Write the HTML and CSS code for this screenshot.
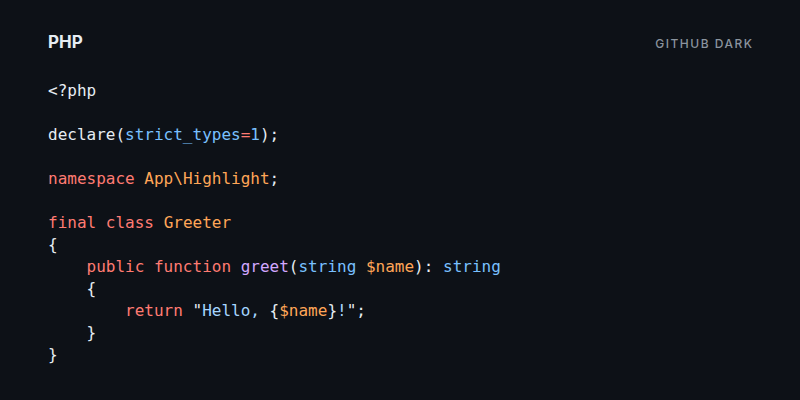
FILE: index.html
```html
<!DOCTYPE html>
<html>
<head>
<meta charset="utf-8">
<link rel="stylesheet" href="styles.css">
</head>
<body>
<div class="card">
  <header class="head">
    <span class="lang">PHP</span>
    <span class="theme">GITHUB DARK</span>
  </header>
<pre class="code"><span class="t">&lt;?php</span>

<span class="t">declare(</span><span class="c">strict_types</span><span class="k">=</span><span class="c">1</span><span class="t">);</span>

<span class="k">namespace</span> <span class="e">App\Highlight</span><span class="t">;</span>

<span class="k">final</span> <span class="k">class</span> <span class="e">Greeter</span>
<span class="t">{</span>
    <span class="k">public</span> <span class="k">function</span> <span class="f">greet</span><span class="t">(</span><span class="c">string</span> <span class="e">$name</span><span class="t">):</span> <span class="c">string</span>
    <span class="t">{</span>
        <span class="k">return</span> <span class="t">"</span><span class="s">Hello, </span><span class="t">{</span><span class="e">$name</span><span class="t">}</span><span class="s">!</span><span class="t">";</span>
    <span class="t">}</span>
<span class="t">}</span></pre>
</div>
</body>
</html>
```

FILE: styles.css
```css
html, body {
  margin: 0;
  padding: 0;
  background: #0d1117;
}
.card {
  width: 800px;
  height: 400px;
  box-sizing: border-box;
  padding: 31px 48px 0 48px;
  background: #0d1117;
  color: #e6edf3;
}
.head {
  display: flex;
  justify-content: space-between;
  align-items: center;
  height: 22px;
}
.lang {
  font-family: Inter, "Noto Sans", sans-serif;
  font-weight: 700;
  font-size: 17px;
  color: #e6edf3;
}
.theme {
  font-family: Inter, "Noto Sans", sans-serif;
  font-weight: 500;
  font-size: 12px;
  letter-spacing: 1.5px;
  color: #8b949e;
  margin-right: -1.5px;
  padding-top: 2px;
}
.code {
  margin: 27px 0 0 0;
  font-family: "DejaVu Sans Mono", "Liberation Mono", monospace;
  font-size: 16px;
  line-height: 22px;
  color: #e6edf3;
  white-space: pre;
}
.t { color: #e6edf3; }
.k { color: #ff7b72; }
.e { color: #ffa657; }
.c { color: #79c0ff; }
.f { color: #d2a8ff; }
.s { color: #a5d6ff; }
```
